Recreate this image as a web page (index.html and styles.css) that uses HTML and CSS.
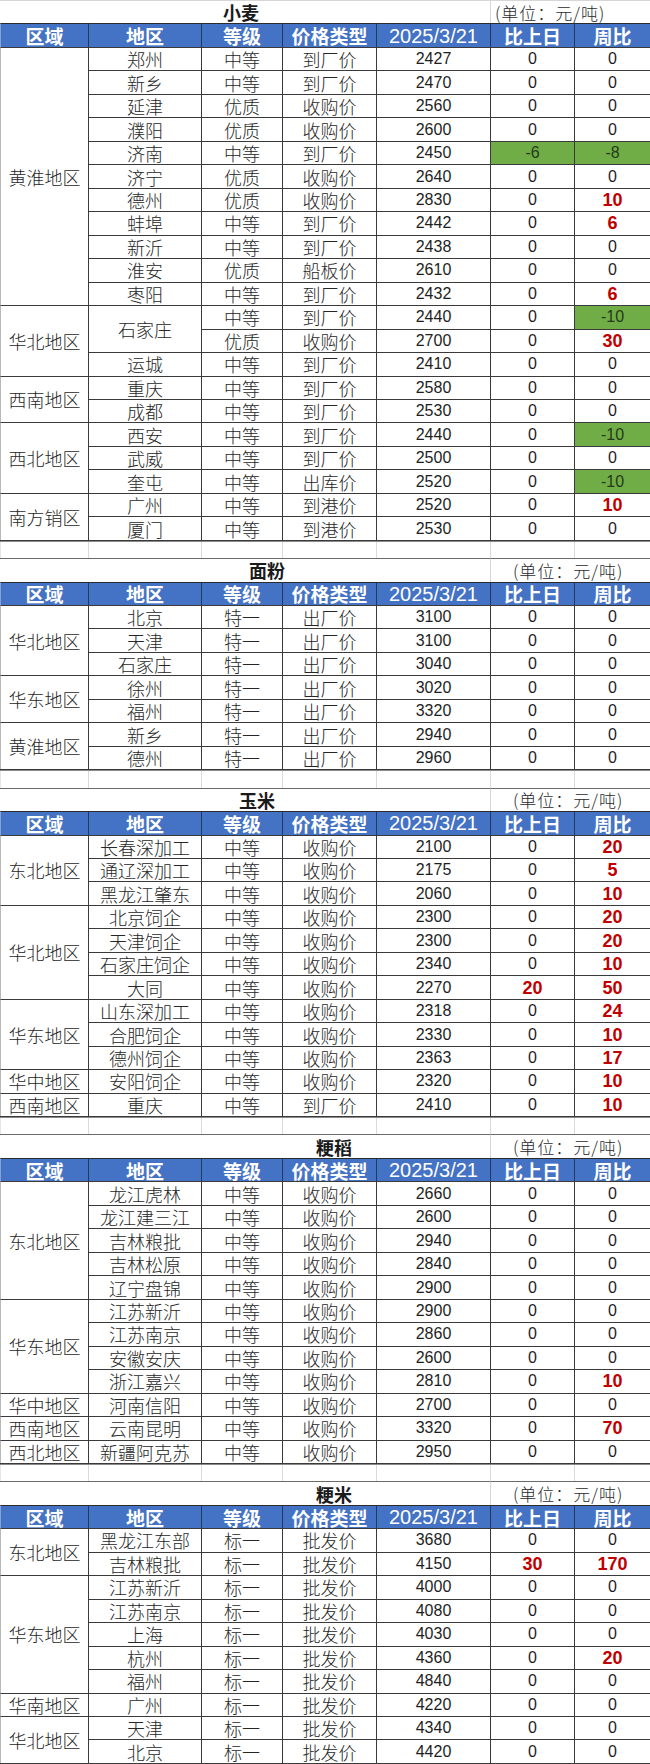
FILE: index.html
```html
<!DOCTYPE html>
<html lang="zh-CN">
<head>
<meta charset="utf-8">
<title>粮食价格</title>
<link rel="stylesheet" href="styles.css">
</head>
<body>
<div class="page">

<div class="sheet">
  <div class="t tw">小麦</div><div class="u u1">(单位：元/吨)</div>
  <div class="h">区域</div><div class="h">地区</div><div class="h">等级</div><div class="h">价格类型</div><div class="h hd">2025/3/21</div><div class="h">比上日</div><div class="h">周比</div>

  <div class="c r s11">黄淮地区</div>
  <div class="c">郑州</div><div class="c">中等</div><div class="c">到厂价</div><div class="c n">2427</div><div class="c n">0</div><div class="c n">0</div>
  <div class="c">新乡</div><div class="c">中等</div><div class="c">到厂价</div><div class="c n">2470</div><div class="c n">0</div><div class="c n">0</div>
  <div class="c">延津</div><div class="c">优质</div><div class="c">收购价</div><div class="c n">2560</div><div class="c n">0</div><div class="c n">0</div>
  <div class="c">濮阳</div><div class="c">优质</div><div class="c">收购价</div><div class="c n">2600</div><div class="c n">0</div><div class="c n">0</div>
  <div class="c">济南</div><div class="c">中等</div><div class="c">到厂价</div><div class="c n">2450</div><div class="c n dn">-6</div><div class="c n dn">-8</div>
  <div class="c">济宁</div><div class="c">优质</div><div class="c">收购价</div><div class="c n">2640</div><div class="c n">0</div><div class="c n">0</div>
  <div class="c">德州</div><div class="c">优质</div><div class="c">收购价</div><div class="c n">2830</div><div class="c n">0</div><div class="c n up">10</div>
  <div class="c">蚌埠</div><div class="c">中等</div><div class="c">到厂价</div><div class="c n">2442</div><div class="c n">0</div><div class="c n up">6</div>
  <div class="c">新沂</div><div class="c">中等</div><div class="c">到厂价</div><div class="c n">2438</div><div class="c n">0</div><div class="c n">0</div>
  <div class="c">淮安</div><div class="c">优质</div><div class="c">船板价</div><div class="c n">2610</div><div class="c n">0</div><div class="c n">0</div>
  <div class="c">枣阳</div><div class="c">中等</div><div class="c">到厂价</div><div class="c n">2432</div><div class="c n">0</div><div class="c n up">6</div>

  <div class="c r s3">华北地区</div>
  <div class="c s2">石家庄</div><div class="c">中等</div><div class="c">到厂价</div><div class="c n">2440</div><div class="c n">0</div><div class="c n dn">-10</div>
  <div class="c">优质</div><div class="c">收购价</div><div class="c n">2700</div><div class="c n">0</div><div class="c n up">30</div>
  <div class="c">运城</div><div class="c">中等</div><div class="c">到厂价</div><div class="c n">2410</div><div class="c n">0</div><div class="c n">0</div>

  <div class="c r s2">西南地区</div>
  <div class="c">重庆</div><div class="c">中等</div><div class="c">到厂价</div><div class="c n">2580</div><div class="c n">0</div><div class="c n">0</div>
  <div class="c">成都</div><div class="c">中等</div><div class="c">到厂价</div><div class="c n">2530</div><div class="c n">0</div><div class="c n">0</div>

  <div class="c r s3">西北地区</div>
  <div class="c">西安</div><div class="c">中等</div><div class="c">到厂价</div><div class="c n">2440</div><div class="c n">0</div><div class="c n dn">-10</div>
  <div class="c">武威</div><div class="c">中等</div><div class="c">到厂价</div><div class="c n">2500</div><div class="c n">0</div><div class="c n">0</div>
  <div class="c">奎屯</div><div class="c">中等</div><div class="c">出库价</div><div class="c n">2520</div><div class="c n">0</div><div class="c n dn">-10</div>

  <div class="c r s2">南方销区</div>
  <div class="c">广州</div><div class="c">中等</div><div class="c">到港价</div><div class="c n">2520</div><div class="c n">0</div><div class="c n up">10</div>
  <div class="c">厦门</div><div class="c">中等</div><div class="c">到港价</div><div class="c n">2530</div><div class="c n">0</div><div class="c n">0</div>
</div>
<div class="gap"><i></i><i></i><i></i><i></i><i></i><i></i><i></i></div>

<div class="sheet">
  <div class="t tf">面粉</div><div class="u">(单位：元/吨)</div>
  <div class="h">区域</div><div class="h">地区</div><div class="h">等级</div><div class="h">价格类型</div><div class="h hd">2025/3/21</div><div class="h">比上日</div><div class="h">周比</div>

  <div class="c r s3">华北地区</div>
  <div class="c">北京</div><div class="c">特一</div><div class="c">出厂价</div><div class="c n">3100</div><div class="c n">0</div><div class="c n">0</div>
  <div class="c">天津</div><div class="c">特一</div><div class="c">出厂价</div><div class="c n">3100</div><div class="c n">0</div><div class="c n">0</div>
  <div class="c">石家庄</div><div class="c">特一</div><div class="c">出厂价</div><div class="c n">3040</div><div class="c n">0</div><div class="c n">0</div>

  <div class="c r s2">华东地区</div>
  <div class="c">徐州</div><div class="c">特一</div><div class="c">出厂价</div><div class="c n">3020</div><div class="c n">0</div><div class="c n">0</div>
  <div class="c">福州</div><div class="c">特一</div><div class="c">出厂价</div><div class="c n">3320</div><div class="c n">0</div><div class="c n">0</div>

  <div class="c r s2">黄淮地区</div>
  <div class="c">新乡</div><div class="c">特一</div><div class="c">出厂价</div><div class="c n">2940</div><div class="c n">0</div><div class="c n">0</div>
  <div class="c">德州</div><div class="c">特一</div><div class="c">出厂价</div><div class="c n">2960</div><div class="c n">0</div><div class="c n">0</div>
</div>
<div class="gap"><i></i><i></i><i></i><i></i><i></i><i></i><i></i></div>

<div class="sheet">
  <div class="t tc">玉米</div><div class="u">(单位：元/吨)</div>
  <div class="h">区域</div><div class="h">地区</div><div class="h">等级</div><div class="h">价格类型</div><div class="h hd">2025/3/21</div><div class="h">比上日</div><div class="h">周比</div>

  <div class="c r s3">东北地区</div>
  <div class="c">长春深加工</div><div class="c">中等</div><div class="c">收购价</div><div class="c n">2100</div><div class="c n">0</div><div class="c n up">20</div>
  <div class="c">通辽深加工</div><div class="c">中等</div><div class="c">收购价</div><div class="c n">2175</div><div class="c n">0</div><div class="c n up">5</div>
  <div class="c">黑龙江肇东</div><div class="c">中等</div><div class="c">收购价</div><div class="c n">2060</div><div class="c n">0</div><div class="c n up">10</div>

  <div class="c r s4">华北地区</div>
  <div class="c">北京饲企</div><div class="c">中等</div><div class="c">收购价</div><div class="c n">2300</div><div class="c n">0</div><div class="c n up">20</div>
  <div class="c">天津饲企</div><div class="c">中等</div><div class="c">收购价</div><div class="c n">2300</div><div class="c n">0</div><div class="c n up">20</div>
  <div class="c">石家庄饲企</div><div class="c">中等</div><div class="c">收购价</div><div class="c n">2340</div><div class="c n">0</div><div class="c n up">10</div>
  <div class="c">大同</div><div class="c">中等</div><div class="c">收购价</div><div class="c n">2270</div><div class="c n up">20</div><div class="c n up">50</div>

  <div class="c r s3">华东地区</div>
  <div class="c">山东深加工</div><div class="c">中等</div><div class="c">收购价</div><div class="c n">2318</div><div class="c n">0</div><div class="c n up">24</div>
  <div class="c">合肥饲企</div><div class="c">中等</div><div class="c">收购价</div><div class="c n">2330</div><div class="c n">0</div><div class="c n up">10</div>
  <div class="c">德州饲企</div><div class="c">中等</div><div class="c">收购价</div><div class="c n">2363</div><div class="c n">0</div><div class="c n up">17</div>

  <div class="c r">华中地区</div>
  <div class="c">安阳饲企</div><div class="c">中等</div><div class="c">收购价</div><div class="c n">2320</div><div class="c n">0</div><div class="c n up">10</div>

  <div class="c r">西南地区</div>
  <div class="c">重庆</div><div class="c">中等</div><div class="c">到厂价</div><div class="c n">2410</div><div class="c n">0</div><div class="c n up">10</div>
</div>
<div class="gap"><i></i><i></i><i></i><i></i><i></i><i></i><i></i></div>

<div class="sheet">
  <div class="t tr">粳稻</div><div class="u">(单位：元/吨)</div>
  <div class="h">区域</div><div class="h">地区</div><div class="h">等级</div><div class="h">价格类型</div><div class="h hd">2025/3/21</div><div class="h">比上日</div><div class="h">周比</div>

  <div class="c r s5">东北地区</div>
  <div class="c">龙江虎林</div><div class="c">中等</div><div class="c">收购价</div><div class="c n">2660</div><div class="c n">0</div><div class="c n">0</div>
  <div class="c">龙江建三江</div><div class="c">中等</div><div class="c">收购价</div><div class="c n">2600</div><div class="c n">0</div><div class="c n">0</div>
  <div class="c">吉林粮批</div><div class="c">中等</div><div class="c">收购价</div><div class="c n">2940</div><div class="c n">0</div><div class="c n">0</div>
  <div class="c">吉林松原</div><div class="c">中等</div><div class="c">收购价</div><div class="c n">2840</div><div class="c n">0</div><div class="c n">0</div>
  <div class="c">辽宁盘锦</div><div class="c">中等</div><div class="c">收购价</div><div class="c n">2900</div><div class="c n">0</div><div class="c n">0</div>

  <div class="c r s4">华东地区</div>
  <div class="c">江苏新沂</div><div class="c">中等</div><div class="c">收购价</div><div class="c n">2900</div><div class="c n">0</div><div class="c n">0</div>
  <div class="c">江苏南京</div><div class="c">中等</div><div class="c">收购价</div><div class="c n">2860</div><div class="c n">0</div><div class="c n">0</div>
  <div class="c">安徽安庆</div><div class="c">中等</div><div class="c">收购价</div><div class="c n">2600</div><div class="c n">0</div><div class="c n">0</div>
  <div class="c">浙江嘉兴</div><div class="c">中等</div><div class="c">收购价</div><div class="c n">2810</div><div class="c n">0</div><div class="c n up">10</div>

  <div class="c r">华中地区</div>
  <div class="c">河南信阳</div><div class="c">中等</div><div class="c">收购价</div><div class="c n">2700</div><div class="c n">0</div><div class="c n">0</div>

  <div class="c r">西南地区</div>
  <div class="c">云南昆明</div><div class="c">中等</div><div class="c">收购价</div><div class="c n">3320</div><div class="c n">0</div><div class="c n up">70</div>

  <div class="c r">西北地区</div>
  <div class="c">新疆阿克苏</div><div class="c">中等</div><div class="c">收购价</div><div class="c n">2950</div><div class="c n">0</div><div class="c n">0</div>
</div>
<div class="gap"><i></i><i></i><i></i><i></i><i></i><i></i><i></i></div>

<div class="sheet">
  <div class="t tr">粳米</div><div class="u">(单位：元/吨)</div>
  <div class="h">区域</div><div class="h">地区</div><div class="h">等级</div><div class="h">价格类型</div><div class="h hd">2025/3/21</div><div class="h">比上日</div><div class="h">周比</div>

  <div class="c r s2">东北地区</div>
  <div class="c">黑龙江东部</div><div class="c">标一</div><div class="c">批发价</div><div class="c n">3680</div><div class="c n">0</div><div class="c n">0</div>
  <div class="c">吉林粮批</div><div class="c">标一</div><div class="c">批发价</div><div class="c n">4150</div><div class="c n up">30</div><div class="c n up">170</div>

  <div class="c r s5">华东地区</div>
  <div class="c">江苏新沂</div><div class="c">标一</div><div class="c">批发价</div><div class="c n">4000</div><div class="c n">0</div><div class="c n">0</div>
  <div class="c">江苏南京</div><div class="c">标一</div><div class="c">批发价</div><div class="c n">4080</div><div class="c n">0</div><div class="c n">0</div>
  <div class="c">上海</div><div class="c">标一</div><div class="c">批发价</div><div class="c n">4030</div><div class="c n">0</div><div class="c n">0</div>
  <div class="c">杭州</div><div class="c">标一</div><div class="c">批发价</div><div class="c n">4360</div><div class="c n">0</div><div class="c n up">20</div>
  <div class="c">福州</div><div class="c">标一</div><div class="c">批发价</div><div class="c n">4840</div><div class="c n">0</div><div class="c n">0</div>

  <div class="c r">华南地区</div>
  <div class="c">广州</div><div class="c">标一</div><div class="c">批发价</div><div class="c n">4220</div><div class="c n">0</div><div class="c n">0</div>

  <div class="c r s2">华北地区</div>
  <div class="c">天津</div><div class="c">标一</div><div class="c">批发价</div><div class="c n">4340</div><div class="c n">0</div><div class="c n">0</div>
  <div class="c">北京</div><div class="c">标一</div><div class="c">批发价</div><div class="c n">4420</div><div class="c n">0</div><div class="c n">0</div>
</div>

</div>
</body>
</html>
```
FILE: styles.css
```css
* { box-sizing: border-box; }

html, body {
  margin: 0;
  padding: 0;
  background: #ffffff;
}

.page {
  width: 650px;
}

.sheet,
.gap {
  display: grid;
  grid-template-columns: 88px 113px 81px 94px 114px 84px 76px;
}

.sheet {
  grid-auto-rows: 23.47px;
  border-bottom: 1px solid #3a3a3a;
}

.gap {
  height: 17.3px;
  border-top: 1px solid #8a8a8a;
}

.gap i {
  border-left: 1px solid #dadada;
}

.gap i:first-child {
  border-left: 1px solid #e6e6e6;
}

/* title row */
.t {
  grid-column: span 5;
  display: flex;
  align-items: center;
  font-family: "Noto Sans CJK SC", sans-serif;
  font-weight: 700;
  font-size: 18px;
  line-height: 1;
  color: #1a1a1a;
  border-top: 1px solid #6a6a6a;
}

.sheet:first-child .t,
.sheet:first-child .u {
  border-top-color: #d6d6d6;
}

.tw { padding-left: 223px; }
.tf { padding-left: 249px; }
.tc { padding-left: 239px; }
.tr { padding-left: 316px; }

.u {
  grid-column: span 2;
  display: flex;
  align-items: center;
  padding-left: 22px;
  font-family: "Noto Sans CJK SC", sans-serif;
  font-weight: 300;
  font-size: 17px;
  letter-spacing: 1px;
  line-height: 1;
  color: #2a2a2a;
  border-left: 1px solid #d6d6d6;
  border-top: 1px solid #6a6a6a;
}

.u1 { padding-left: 4px; }

/* header row */
.h {
  display: flex;
  align-items: center;
  justify-content: center;
  background: #4472c4;
  color: #ffffff;
  font-family: "Noto Sans CJK SC", sans-serif;
  font-weight: 700;
  font-size: 19px;
  line-height: 1;
  border-top: 1px solid #2b2b2b;
  border-left: 1px solid #23385e;
}

.h:nth-child(3) {
  border-left: 1px solid #8aa2cf;
}

.hd {
  font-family: "Liberation Sans", sans-serif;
  font-weight: 400;
  font-size: 20px;
}

/* data cells */
.c {
  display: flex;
  align-items: center;
  justify-content: center;
  font-family: "Noto Sans CJK SC", sans-serif;
  font-weight: 300;
  font-size: 18px;
  line-height: 1;
  color: #262626;
  border-top: 1px solid #3a3a3a;
  border-left: 1px solid #3a3a3a;
  white-space: nowrap;
}

.r {
  grid-column: 1;
  border-left: 1px solid #b8b8b8;
}

.s2 { grid-row: span 2; }
.s3 { grid-row: span 3; }
.s4 { grid-row: span 4; }
.s5 { grid-row: span 5; }
.s11 { grid-row: span 11; }

.n {
  font-family: "Liberation Sans", "Noto Sans CJK SC", sans-serif;
  font-weight: 400;
  font-size: 16px;
  color: #1e1e1e;
}

.up {
  color: #c00000;
  font-weight: 700;
  font-size: 18px;
}

.dn {
  background: #70ad47;
  color: #253a19;
}
```
